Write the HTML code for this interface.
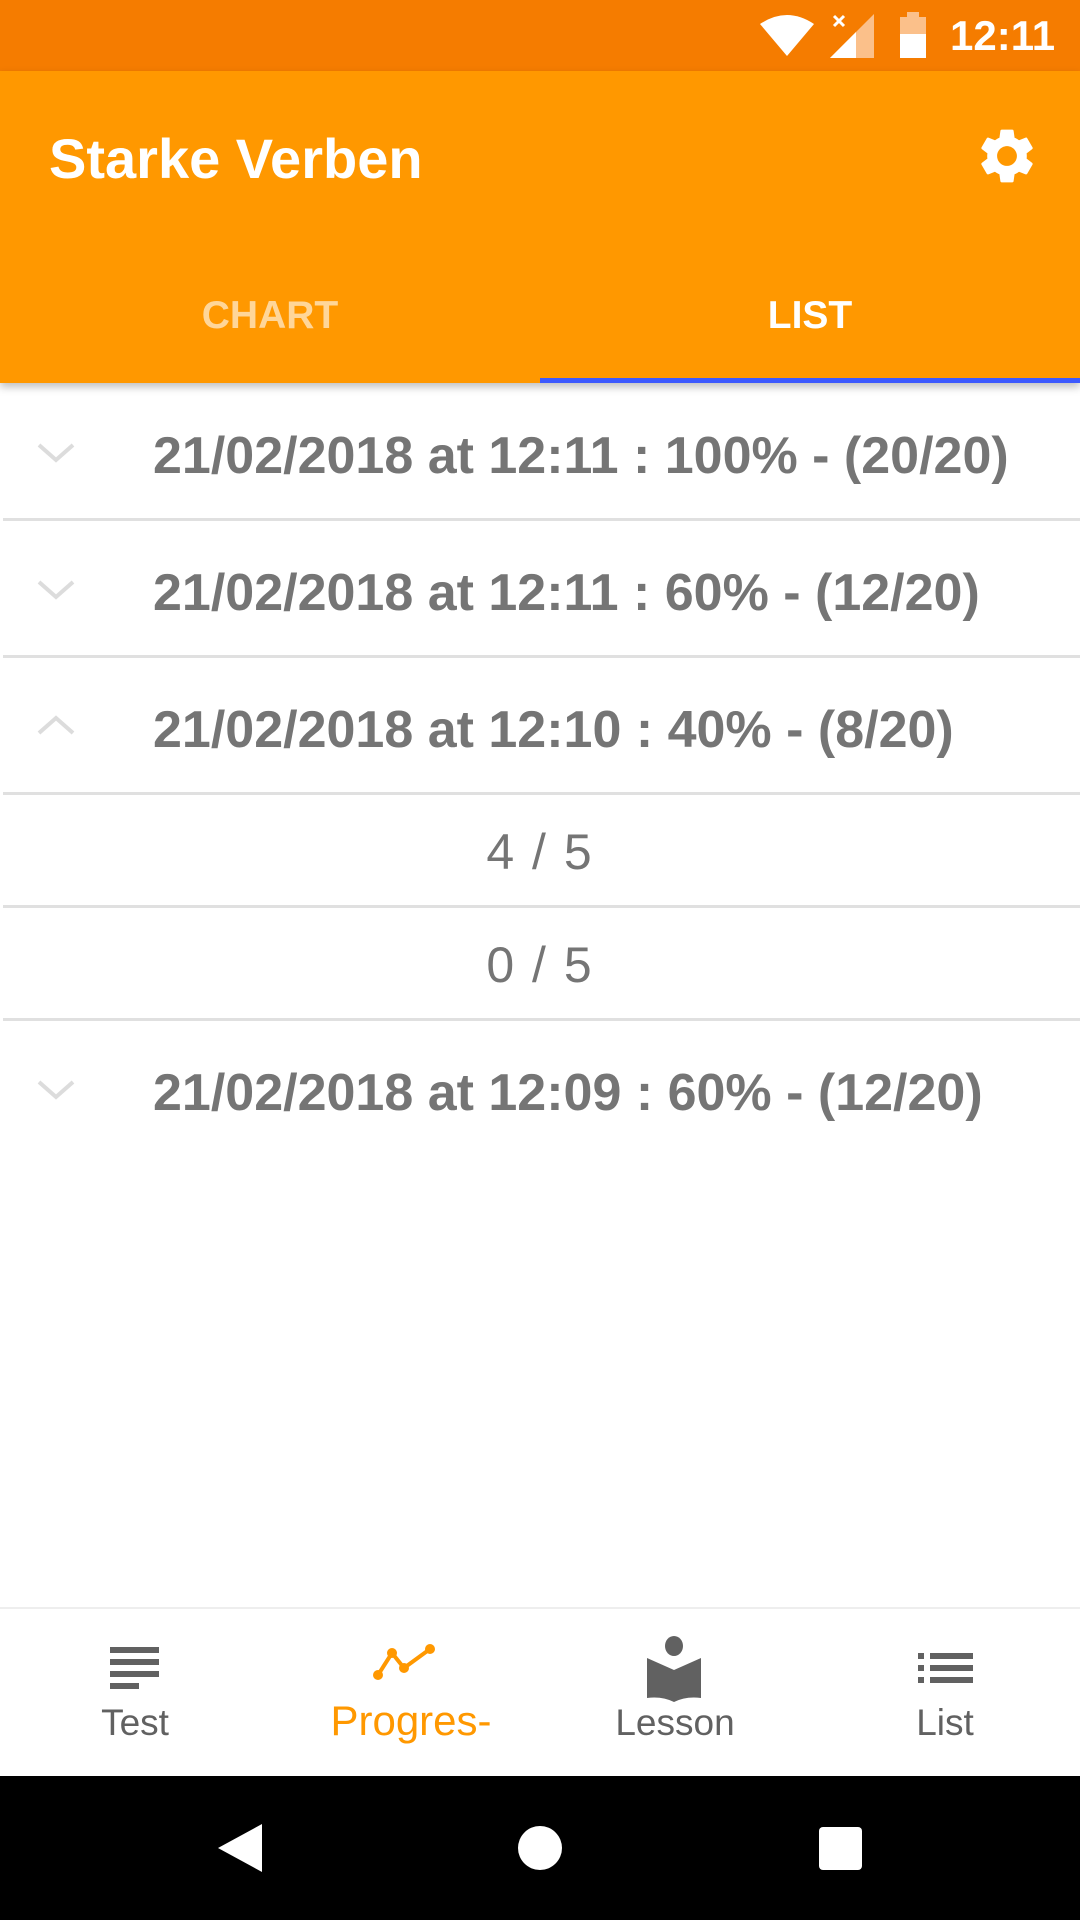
<!DOCTYPE html>
<html><head><meta charset="utf-8"><style>
*{margin:0;padding:0;box-sizing:border-box}
body{width:1080px;height:1920px;position:relative;background:#fff;font-family:"Liberation Sans",sans-serif;overflow:hidden}
.status{position:absolute;top:0;left:0;width:1080px;height:71px;background:#f57c00;color:#fff}
.bar{position:absolute;top:71px;left:0;width:1080px;height:312px;background:#ff9800;box-shadow:0 4px 8px rgba(0,0,0,.25);z-index:2}
.title{position:absolute;left:49px;font-size:56px;font-weight:bold;color:#fff}
.tab{position:absolute;font-size:39px;font-weight:bold;width:540px;text-align:center}
.ind{position:absolute;left:540px;width:540px;height:5px;background:#3d5afe}
.row{position:absolute;left:0;width:1080px;color:#757575}
.row .t{position:absolute;left:153px;font-size:52px;font-weight:bold;white-space:nowrap}
.div{position:absolute;left:3px;width:1077px;height:3px;background:#e0e0e0}
.sub{position:absolute;left:0;width:1080px;text-align:center;font-size:50px;color:#757575;letter-spacing:2px}
.chev{position:absolute;left:37px}
.nav{position:absolute;top:1607px;left:0;width:1080px;height:169px;background:#fff;border-top:2px solid #eee}
.lbl{position:absolute;top:1702px;font-size:37px;color:#616161;text-align:center;width:270px}
.sys{position:absolute;top:1776px;left:0;width:1080px;height:144px;background:#000}
</style></head><body>
<div class="status">
<svg style="position:absolute;left:760px;top:14px" width="54" height="42"><path d="M0 10 Q27 -8 54 10 L27 42 Z" fill="#fff"/></svg>
<svg style="position:absolute;left:830px;top:14px" width="44" height="44"><path d="M44 0 V44 H0 Z" fill="#fbc08a"/><path d="M26 18 V44 H0 Z" fill="#fff"/><path d="M4 2 L14 12 M14 2 L4 12" stroke="#fff" stroke-width="3"/></svg>
<svg style="position:absolute;left:898px;top:12px" width="30" height="46"><rect x="9" y="0" width="12" height="5" fill="#fbc08a"/><rect x="2" y="5" width="26" height="41" fill="#fbc08a"/><rect x="2" y="22" width="26" height="24" fill="#fff"/></svg>
<div style="position:absolute;left:950px;top:12px;font-size:42px;font-weight:bold">12:11</div>
</div>
<div class="bar">
<div class="title" style="top:55px">Starke Verben</div>
<svg style="position:absolute;left:974px;top:52px" width="66" height="66" viewBox="0 0 24 24"><path fill="#fff" d="M19.14 12.94c.04-.3.06-.61.06-.94 0-.32-.02-.64-.07-.94l2.030-1.58a.49.49 0 0 0 .12-.61l-1.92-3.32a.488.488 0 0 0-.59-.22l-2.39.96c-.5-.38-1.030-.7-1.62-.94l-.36-2.54a.484.484 0 0 0-.48-.41h-3.84c-.24 0-.43.17-.47.41l-.36 2.540c-.59.24-1.13.57-1.62.94l-2.39-.96c-.22-.08-.47 0-.59.22L2.74 8.87c-.12.21-.08.47.12.61l2.03 1.58c-.05.3-.09.63-.09.94s.02.64.07.94l-2.03 1.58a.49.49 0 0 0-.12.61l1.92 3.32c.12.22.37.29.59.22l2.39-.96c.5.38 1.03.7 1.62.94l.36 2.54c.05.24.24.41.48.41h3.84c.24 0 .44-.17.47-.41l.36-2.54c.59-.24 1.13-.56 1.62-.94l2.39.96c.22.08.47 0 .59-.22l1.92-3.32c.12-.22.07-.47-.12-.61l-2.01-1.58zM12 15.6c-1.98 0-3.6-1.62-3.6-3.6s1.62-3.6 3.6-3.6 3.6 1.62 3.6 3.6-1.62 3.6-3.6 3.6z"/></svg>
<div class="tab" style="left:0;top:223px;color:#ffd699">CHART</div>
<div class="tab" style="left:540px;top:223px;color:#fff">LIST</div>
<div class="ind" style="top:307px"></div>
</div>

<div class="row" style="top:453px"><svg class="chev" style="top:-10px" width="38" height="20"><path d="M2 2 L19 17 L36 2" stroke="#dcdcdc" stroke-width="4" fill="none"/></svg><div class="t" style="top:-27px">21/02/2018 at 12:11 : 100% - (20/20)</div></div>
<div class="div" style="top:518px"></div>
<div class="row" style="top:590px"><svg class="chev" style="top:-10px" width="38" height="20"><path d="M2 2 L19 17 L36 2" stroke="#dcdcdc" stroke-width="4" fill="none"/></svg><div class="t" style="top:-27px">21/02/2018 at 12:11 : 60% - (12/20)</div></div>
<div class="div" style="top:655px"></div>
<div class="row" style="top:727px"><svg class="chev" style="top:-12px" width="38" height="20"><path d="M2 18 L19 3 L36 18" stroke="#dcdcdc" stroke-width="4" fill="none"/></svg><div class="t" style="top:-27px">21/02/2018 at 12:10 : 40% - (8/20)</div></div>
<div class="div" style="top:792px"></div>
<div class="sub" style="top:823px">4 / 5</div>
<div class="div" style="top:905px"></div>
<div class="sub" style="top:936px">0 / 5</div>
<div class="div" style="top:1018px"></div>
<div class="row" style="top:1090px"><svg class="chev" style="top:-10px" width="38" height="20"><path d="M2 2 L19 17 L36 2" stroke="#dcdcdc" stroke-width="4" fill="none"/></svg><div class="t" style="top:-27px">21/02/2018 at 12:09 : 60% - (12/20)</div></div>

<div class="nav"></div>
<svg style="position:absolute;left:110px;top:1647px" width="50" height="44"><rect x="0" y="0" width="49" height="6" fill="#616161"/><rect x="0" y="12" width="49" height="6" fill="#616161"/><rect x="0" y="24" width="49" height="6" fill="#616161"/><rect x="0" y="36" width="29" height="6" fill="#616161"/></svg>
<svg style="position:absolute;left:370px;top:1643px" width="70" height="40"><path d="M8 32 L22 10 L34 25 L60 6" stroke="#ff9800" stroke-width="4" fill="none"/><circle cx="8" cy="32" r="5" fill="#ff9800"/><circle cx="22" cy="10" r="5" fill="#ff9800"/><circle cx="34" cy="25" r="5" fill="#ff9800"/><circle cx="60" cy="6" r="5" fill="#ff9800"/></svg>
<svg style="position:absolute;left:646px;top:1636px" width="56" height="66"><ellipse cx="28" cy="10" rx="9" ry="10" fill="#616161"/><path d="M1 22 L28 34 L55 22 V62 Q40 60 28 66 Q16 60 1 62 Z" fill="#616161"/></svg>
<svg style="position:absolute;left:918px;top:1653px" width="56" height="34"><rect x="0" y="0" width="6" height="6" fill="#616161"/><rect x="12" y="0" width="43" height="6" fill="#616161"/><rect x="0" y="12" width="6" height="6" fill="#616161"/><rect x="12" y="12" width="43" height="6" fill="#616161"/><rect x="0" y="24" width="6" height="6" fill="#616161"/><rect x="12" y="24" width="43" height="6" fill="#616161"/></svg>
<div class="lbl" style="left:0">Test</div>
<div class="lbl" style="left:276px;color:#ff9800;font-size:42px;top:1697px">Progres-</div>
<div class="lbl" style="left:540px">Lesson</div>
<div class="lbl" style="left:810px">List</div>

<div class="sys">
<svg style="position:absolute;left:218px;top:48px" width="44" height="48"><path d="M44 0 V48 L0 24 Z" fill="#fff"/></svg>
<div style="position:absolute;left:518px;top:50px;width:44px;height:44px;border-radius:50%;background:#fff"></div>
<div style="position:absolute;left:819px;top:51px;width:43px;height:43px;border-radius:4px;background:#fff"></div>
</div>
</body></html>
